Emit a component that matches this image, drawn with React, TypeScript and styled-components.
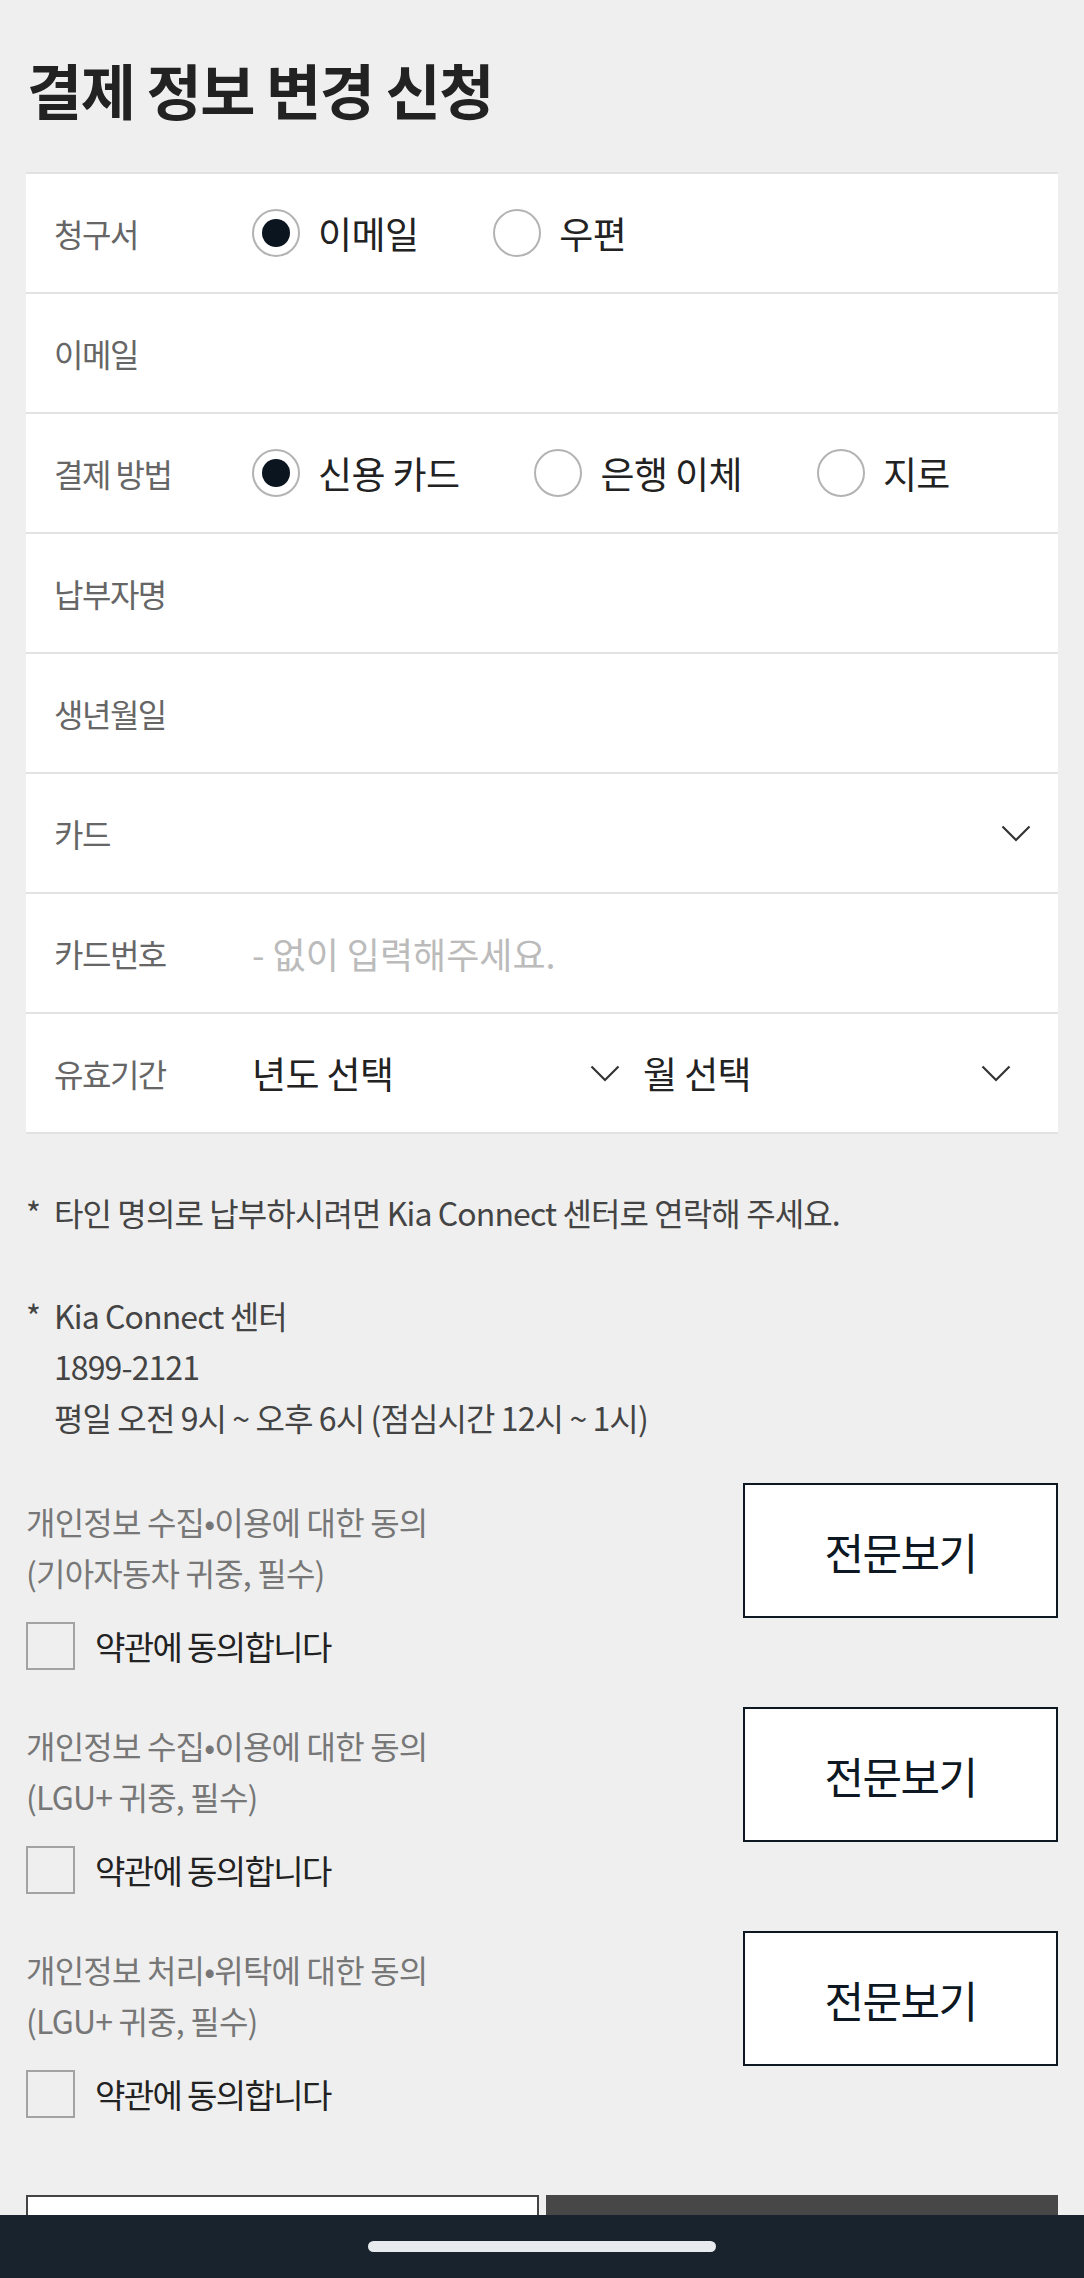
import React from "react";
import styled, { createGlobalStyle } from "styled-components";

const Global = createGlobalStyle`
  html, body {
    margin: 0;
    padding: 0;
    background: #efefef;
    font-family: "Noto Sans CJK KR", "Noto Sans", sans-serif;
  }
  * { box-sizing: border-box; }
`;

const Page = styled.main`
  padding: 53px 26px 80px;
`;

const Title = styled.h1`
  margin: 0 0 48px;
  font-size: 60px;
  line-height: 71px;
  font-weight: 700;
  letter-spacing: -1.5px;
  color: #222;
  padding-left: 1px;
`;

const Card = styled.section`
  background: #fff;
  border-top: 2px solid #e2e2e2;
`;

const Row = styled.div`
  display: flex;
  align-items: center;
  height: 120px;
  padding: 0 6px 0 28px;
  border-bottom: 2px solid #e2e2e2;
`;

const Label = styled.div`
  flex: 0 0 198px;
  font-size: 32px;
  letter-spacing: -1.5px;
  color: #666;
`;

const Value = styled.div`
  flex: 1;
  display: flex;
  align-items: center;
  min-width: 0;
`;

const RadioGroup = styled.div`
  display: flex;
  align-items: center;
  gap: 75px;
`;

const Option = styled.label`
  display: flex;
  align-items: center;
  gap: 18px;
  font-size: 37px;
  letter-spacing: -0.6px;
  color: #222;
`;

const Circle = styled.span<{ $checked?: boolean }>`
  width: 48px;
  height: 48px;
  border-radius: 50%;
  border: 2px solid #b3b3b3;
  display: flex;
  align-items: center;
  justify-content: center;
  background: #fff;
  &::after {
    content: "";
    width: 28px;
    height: 28px;
    border-radius: 50%;
    background: ${(p) => (p.$checked ? "#0b1520" : "transparent")};
  }
`;

const Placeholder = styled.span`
  font-size: 36px;
  letter-spacing: 0;
  color: #bbb;
`;

const SelectBox = styled.div`
  display: flex;
  align-items: center;
  justify-content: space-between;
  padding-right: 21px;
  font-size: 37px;
  letter-spacing: -0.6px;
  color: #222;
`;

const FullSelect = styled(SelectBox)`
  width: 100%;
`;

const SelectPair = styled.div`
  display: grid;
  grid-template-columns: 389px 389px;
  gap: 2px;
`;

const Chevron = () => (
  <svg width="30" height="17" viewBox="0 0 30 17" fill="none">
    <polyline points="1.5,1.5 15,15 28.5,1.5" stroke="#333" strokeWidth="2.2" />
  </svg>
);

const Notes = styled.div`
  margin-top: 53px;
  display: flex;
  flex-direction: column;
  gap: 52px;
`;

const Note = styled.div`
  display: flex;
  font-size: 32px;
  line-height: 51px;
  letter-spacing: -0.9px;
  color: #444;
`;

const Star = styled.span`
  flex: 0 0 28px;
`;

const Agreements = styled.div`
  margin-top: 40px;
  display: flex;
  flex-direction: column;
  gap: 37px;
`;

const Agreement = styled.div`
  display: flex;
  flex-direction: column;
  gap: 4px;
`;

const AgreeHead = styled.div`
  display: flex;
  justify-content: space-between;
  align-items: flex-start;
`;

const AgreeTitle = styled.div`
  padding-top: 13px;
  font-size: 32px;
  line-height: 51px;
  letter-spacing: -0.8px;
  color: #777;
`;

const ViewButton = styled.button`
  width: 315px;
  height: 135px;
  background: #fff;
  border: 2.5px solid #0d1823;
  font-family: inherit;
  font-size: 43px;
  letter-spacing: -1.5px;
  color: #0d1823;
  padding: 0;
`;

const CheckRow = styled.label`
  display: flex;
  align-items: center;
  gap: 20px;
  font-size: 33px;
  letter-spacing: -1.6px;
  color: #222;
`;

const Box = styled.span`
  width: 49px;
  height: 48px;
  border: 2px solid #a3a3a3;
  background: transparent;
`;

const Actions = styled.div`
  margin-top: 77px;
  display: grid;
  grid-template-columns: 1fr 1fr;
  gap: 7px;
`;

const ActionButton = styled.button<{ $primary?: boolean }>`
  height: 100px;
  border: 2px solid ${(p) => (p.$primary ? "#474747" : "#444")};
  background: ${(p) => (p.$primary ? "#474747" : "#fff")};
  color: ${(p) => (p.$primary ? "#fff" : "#222")};
  font-family: inherit;
  font-size: 36px;
`;

const NavBar = styled.div`
  position: fixed;
  left: 0;
  right: 0;
  bottom: 0;
  height: 63px;
  background: #19232e;
  display: flex;
  align-items: center;
  justify-content: center;
`;

const Pill = styled.div`
  width: 348px;
  height: 11px;
  border-radius: 6px;
  background: #e8ebee;
`;

const agreements = [
  ["개인정보 수집•이용에 대한 동의", "(기아자동차 귀중, 필수)"],
  ["개인정보 수집•이용에 대한 동의", "(LGU+ 귀중, 필수)"],
  ["개인정보 처리•위탁에 대한 동의", "(LGU+ 귀중, 필수)"],
];

export default function App() {
  return (
    <>
      <Global />
      <Page>
        <Title>결제 정보 변경 신청</Title>
        <Card>
          <Row>
            <Label>청구서</Label>
            <Value>
              <RadioGroup>
                <Option>
                  <Circle $checked />
                  이메일
                </Option>
                <Option>
                  <Circle />
                  우편
                </Option>
              </RadioGroup>
            </Value>
          </Row>
          <Row>
            <Label>이메일</Label>
          </Row>
          <Row>
            <Label>결제 방법</Label>
            <Value>
              <RadioGroup>
                <Option>
                  <Circle $checked />
                  신용 카드
                </Option>
                <Option>
                  <Circle />
                  은행 이체
                </Option>
                <Option>
                  <Circle />
                  지로
                </Option>
              </RadioGroup>
            </Value>
          </Row>
          <Row>
            <Label>납부자명</Label>
          </Row>
          <Row>
            <Label>생년월일</Label>
          </Row>
          <Row>
            <Label>카드</Label>
            <Value>
              <FullSelect>
                <span />
                <Chevron />
              </FullSelect>
            </Value>
          </Row>
          <Row>
            <Label>카드번호</Label>
            <Value>
              <Placeholder>- 없이 입력해주세요.</Placeholder>
            </Value>
          </Row>
          <Row>
            <Label>유효기간</Label>
            <Value>
              <SelectPair>
                <SelectBox>
                  <span>년도 선택</span>
                  <Chevron />
                </SelectBox>
                <SelectBox>
                  <span>월 선택</span>
                  <Chevron />
                </SelectBox>
              </SelectPair>
            </Value>
          </Row>
        </Card>

        <Notes>
          <Note>
            <Star>*</Star>
            <span>타인 명의로 납부하시려면 Kia Connect 센터로 연락해 주세요.</span>
          </Note>
          <Note>
            <Star>*</Star>
            <span>
              Kia Connect 센터
              <br />
              1899-2121
              <br />
              평일 오전 9시 ~ 오후 6시 (점심시간 12시 ~ 1시)
            </span>
          </Note>
        </Notes>

        <Agreements>
          {agreements.map(([a, b], i) => (
            <Agreement key={i}>
              <AgreeHead>
                <AgreeTitle>
                  {a}
                  <br />
                  {b}
                </AgreeTitle>
                <ViewButton>전문보기</ViewButton>
              </AgreeHead>
              <CheckRow>
                <Box />
                약관에 동의합니다
              </CheckRow>
            </Agreement>
          ))}
        </Agreements>

        <Actions>
          <ActionButton>취소</ActionButton>
          <ActionButton $primary>신청</ActionButton>
        </Actions>
      </Page>
      <NavBar>
        <Pill />
      </NavBar>
    </>
  );
}
